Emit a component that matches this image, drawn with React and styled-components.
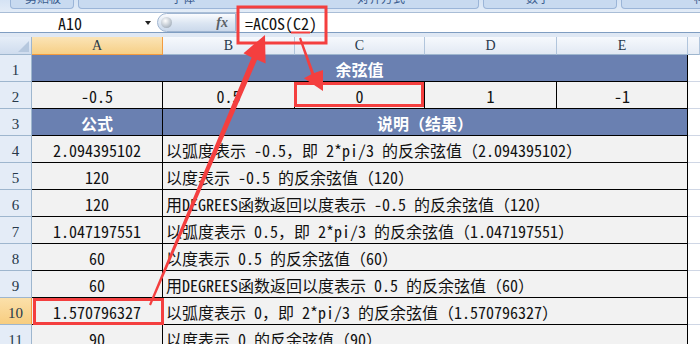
import React from "react";
import styled, { createGlobalStyle } from "styled-components";

const CELL_FONT = `"Noto Sans Mono CJK SC", "Noto Sans CJK SC", "Liberation Mono", monospace`;

const GlobalStyle = createGlobalStyle`
  html, body {
    margin: 0;
    padding: 0;
    background: #ffffff;
    overflow: hidden;
  }
  body {
    font-family: ${CELL_FONT};
  }
`;

const rows = [
  ["2.094395102", "以弧度表示 -0.5，即 2*pi/3 的反余弦值（2.094395102）"],
  ["120", "以度表示 -0.5 的反余弦值（120）"],
  ["120", "用DEGREES函数返回以度表示 -0.5 的反余弦值（120）"],
  ["1.047197551", "以弧度表示 0.5，即 2*pi/3 的反余弦值（1.047197551）"],
  ["60", "以度表示 0.5 的反余弦值（60）"],
  ["60", "用DEGREES函数返回以度表示 0.5 的反余弦值（60）"],
  ["1.570796327", "以弧度表示 0，即 2*pi/3 的反余弦值（1.570796327）"],
  ["90", "以度表示 0 的反余弦值（90）"],
];

// ribbon group tabs, only the bottom edge of each is visible
const ribbonGroups = [
  { width: 64, labels: [{ text: "剪贴板", at: 14 }] },
  {
    width: 401,
    labels: [
      { text: "字体", at: 92 },
      { text: "对齐方式", at: 162 },
    ],
  },
  { width: 134, labels: [{ text: "数字", at: 42 }] },
  { width: 90, labels: [{ text: "样式", at: 72 }] },
];

function App() {
  return (
    <Page>
      <GlobalStyle />
      <Ribbon>
        {ribbonGroups.map((g, i) => (
          <RibbonGroup key={i} $w={g.width}>
            {g.labels.map((l) => (
              <GroupLabel key={l.text} $at={l.at}>
                {l.text}
              </GroupLabel>
            ))}
          </RibbonGroup>
        ))}
      </Ribbon>
      <FormulaBar>
        <NameBox>
          <span>A10</span>
          <DropArrow />
        </NameBox>
        <FxButton>
          <FxKnob />
          <FxLabel>fx</FxLabel>
        </FxButton>
        <FormulaInput>=ACOS(C2)</FormulaInput>
      </FormulaBar>
      <Gap />
      <Sheet>
        <Corner />
        {["A", "B", "C", "D", "E"].map((c) => (
          <ColHead key={c} $active={c === "A"}>
            {c}
          </ColHead>
        ))}
        <ColHead $tail />

        <RowHead>1</RowHead>
        <Cell $band $bold $span={5}>
          余弦值
        </Cell>
        <Blank />

        <RowHead>2</RowHead>
        {["-0.5", "0.5", "0", "1", "-1"].map((v, i) => (
          <Cell key={i}>{v}</Cell>
        ))}
        <Blank />

        <RowHead>3</RowHead>
        <Cell $band $bold>
          公式
        </Cell>
        <Cell $band $bold $span={4}>
          说明（结果）
        </Cell>
        <Blank />

        {rows.map(([value, text], i) => (
          <React.Fragment key={i}>
            <RowHead $active={i + 4 === 10}>{i + 4}</RowHead>
            <Cell>{value}</Cell>
            <Cell $span={4} $left>
              {text}
            </Cell>
            <Blank />
          </React.Fragment>
        ))}
      </Sheet>

      <Marks viewBox="0 0 700 344" width="700" height="344">
        <rect x="238" y="7" width="88" height="36" fill="none" stroke="#f43f3f" strokeWidth="3" />
        <line x1="291" y1="32.5" x2="310" y2="32.5" stroke="#f43f3f" strokeWidth="2" />
        <rect x="295.5" y="83.5" width="127" height="22" fill="none" stroke="#f43f3f" strokeWidth="3" />
        <rect x="34.5" y="299.5" width="128" height="24" fill="none" stroke="#f43f3f" strokeWidth="3" />
        <polygon
          fill="#f43f3f"
          points="265,35 265.6,63.4 257.1,59.7 151,305.4 149,304.6 251.6,57.4 243.5,53.2"
        />
        <polygon
          fill="#f43f3f"
          points="323,91 303.9,78.3 311.3,74.2 299,38.5 301,37.5 314.1,73 323,70"
        />
      </Marks>
    </Page>
  );
}

const Page = styled.div`
  position: relative;
  width: 700px;
  height: 344px;
  overflow: hidden;
  background: #ffffff;
`;

const Ribbon = styled.div`
  display: flex;
  gap: 4px;
  height: 13px;
  padding-left: 10px;
  box-sizing: border-box;
  background: linear-gradient(#d5e3f4, #e3ecf7);
  border-bottom: 1px solid #a9bdd6;
  overflow: hidden;
`;

const RibbonGroup = styled.div`
  flex: 0 0 ${(p) => p.$w}px;
  height: 9px;
  box-sizing: border-box;
  background: #c8daf0;
  border: 1px solid #9bb5d8;
  border-top: none;
  border-radius: 0 0 4px 4px;
  overflow: hidden;
  display: flex;
  align-items: flex-start;
`;

const GroupLabel = styled.span`
  margin: -8px 0 0 ${(p) => p.$at}px;
  font-family: "Noto Sans CJK SC", sans-serif;
  font-size: 12px;
  line-height: 12px;
  color: #3b5d8f;
  white-space: nowrap;
`;

const FormulaBar = styled.div`
  display: flex;
  align-items: stretch;
  height: 19px;
  background: #ffffff;
  border-bottom: 1px solid #7f9dc1;
`;

const NameBox = styled.div`
  position: relative;
  width: 157px;
  display: flex;
  align-items: center;
  padding-left: 58px;
  box-sizing: border-box;
  font-size: 16px;
  color: #111;
`;

const DropArrow = styled.i`
  position: absolute;
  left: 145px;
  top: 8px;
  width: 0;
  height: 0;
  border-left: 3.5px solid transparent;
  border-right: 3.5px solid transparent;
  border-top: 4px solid #222;
`;

const FxButton = styled.div`
  width: 79px;
  box-sizing: border-box;
  display: flex;
  align-items: center;
  justify-content: space-between;
  padding: 0 7px 0 3px;
  background: linear-gradient(#fbfcfe, #dbe5f2 55%, #cbd9eb);
  border: 1px solid #9fb5d1;
  border-radius: 10px 0 0 10px;
`;

const FxKnob = styled.i`
  width: 11px;
  height: 11px;
  border-radius: 50%;
  background: radial-gradient(circle at 40% 35%, #ffffff, #b9c2cc 60%, #8c97a4);
`;

const FxLabel = styled.span`
  font-family: "Liberation Serif", serif;
  font-style: italic;
  font-weight: bold;
  font-size: 14px;
  color: #5a5f66;
`;

const FormulaInput = styled.div`
  flex: 1;
  display: flex;
  align-items: center;
  padding-left: 8px;
  font-size: 16px;
  color: #111;
  border-left: 1px solid #c5d3e4;
`;

const Gap = styled.div`
  height: 4px;
  background: #dfe8f4;
`;

const Sheet = styled.div`
  display: grid;
  grid-template-columns: 32px 131px 132px 130px 132px 131px 1fr;
  grid-template-rows: 18px repeat(11, 27px);
`;

const Corner = styled.div`
  position: relative;
  box-sizing: border-box;
  background: linear-gradient(#e6eef8, #cfdcee);
  border-right: 1px solid #9eb6ce;
  border-bottom: 1px solid #9eb6ce;
  &::after {
    content: "";
    position: absolute;
    right: 2px;
    bottom: 2px;
    border-left: 11px solid transparent;
    border-bottom: 11px solid #b6c8de;
  }
`;

const ColHead = styled.div`
  box-sizing: border-box;
  display: flex;
  align-items: center;
  justify-content: center;
  font-family: "Liberation Serif", serif;
  font-size: 14px;
  color: #27384a;
  background: ${(p) =>
    p.$active
      ? "linear-gradient(#fbe4b6, #f6cf86)"
      : p.$tail
      ? "linear-gradient(#f6f8fc, #e6ecf5)"
      : "linear-gradient(#f6f9fd, #e2e9f3)"};
  border-right: 1px solid ${(p) => (p.$active ? "#f29b3f" : "#b1c5dc")};
  border-bottom: 1px solid ${(p) => (p.$active ? "#f29b3f" : "#9eb6ce")};
`;

const RowHead = styled.div`
  box-sizing: border-box;
  display: flex;
  align-items: flex-end;
  justify-content: center;
  padding-bottom: 2px;
  font-family: "Liberation Serif", serif;
  font-size: 15px;
  color: #27384a;
  background: ${(p) => (p.$active ? "linear-gradient(#fbe0aa, #f7cd80)" : "#e4ecf7")};
  border-right: 1px solid ${(p) => (p.$active ? "#f29b3f" : "#9eb6ce")};
  border-bottom: 1px solid #9eb6ce;
`;

const Cell = styled.div`
  grid-column: span ${(p) => p.$span || 1};
  box-sizing: border-box;
  display: flex;
  align-items: center;
  justify-content: ${(p) => (p.$left ? "flex-start" : "center")};
  padding: 2px 0 0 ${(p) => (p.$left ? "3px" : "0")};
  white-space: nowrap;
  overflow: hidden;
  font-size: 16px;
  font-weight: ${(p) => (p.$bold ? "bold" : "normal")};
  color: ${(p) => (p.$band ? "#ffffff" : "#111111")};
  background: ${(p) => (p.$band ? "#6a80b1" : "#f2f2f2")};
  border-right: 1px solid #000;
  border-bottom: 1px solid #000;
`;

const Blank = styled.div`
  box-sizing: border-box;
  background: #ffffff;
  border-bottom: 1px solid #d0d7e5;
`;

const Marks = styled.svg`
  position: absolute;
  left: 0;
  top: 0;
  pointer-events: none;
`;

export default App;
